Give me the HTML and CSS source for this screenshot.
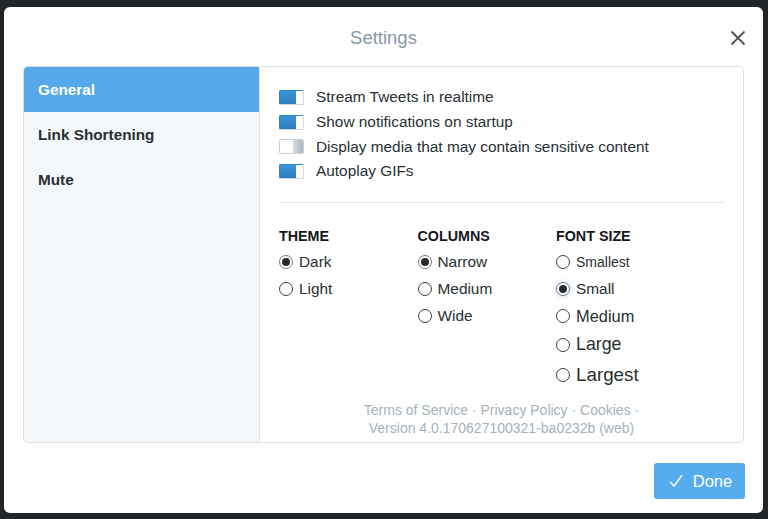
FILE: index.html
```html
<!DOCTYPE html>
<html>
<head>
<meta charset="utf-8">
<link rel="stylesheet" href="styles.css">
</head>
<body>
<div class="dialog">
  <header class="dlg-header">
    <h1 class="dlg-title">Settings</h1>
    <button class="close" aria-label="Close">
      <svg width="16" height="16" viewBox="0 0 16 16"><path d="M1.5 1.5 L14.5 14.5 M14.5 1.5 L1.5 14.5" stroke="#555" stroke-width="1.9" fill="none"/></svg>
    </button>
  </header>
  <div class="panel">
    <nav class="sidebar">
      <div class="nav-item active">General</div>
      <div class="nav-item">Link Shortening</div>
      <div class="nav-item">Mute</div>
    </nav>
    <section class="content">
      <div class="toggles">
        <div class="toggle-row"><span class="toggle on"></span><span>Stream Tweets in realtime</span></div>
        <div class="toggle-row"><span class="toggle on"></span><span>Show notifications on startup</span></div>
        <div class="toggle-row"><span class="toggle off"></span><span>Display media that may contain sensitive content</span></div>
        <div class="toggle-row"><span class="toggle on"></span><span>Autoplay GIFs</span></div>
      </div>
      <div class="divider"></div>
      <div class="groups">
        <div class="group">
          <h2 class="group-title">THEME</h2>
          <div class="radio-row"><span class="radio checked"></span>Dark</div>
          <div class="radio-row"><span class="radio"></span>Light</div>
        </div>
        <div class="group">
          <h2 class="group-title">COLUMNS</h2>
          <div class="radio-row"><span class="radio checked"></span>Narrow</div>
          <div class="radio-row"><span class="radio"></span>Medium</div>
          <div class="radio-row"><span class="radio"></span>Wide</div>
        </div>
        <div class="group">
          <h2 class="group-title">FONT SIZE</h2>
          <div class="radio-row fs-1"><span class="radio"></span>Smallest</div>
          <div class="radio-row fs-2"><span class="radio checked focus"></span>Small</div>
          <div class="radio-row fs-3"><span class="radio"></span>Medium</div>
          <div class="radio-row fs-4"><span class="radio"></span>Large</div>
          <div class="radio-row fs-5"><span class="radio"></span>Largest</div>
        </div>
      </div>
      <footer class="links">
        <div>Terms of Service · Privacy Policy · Cookies ·</div>
        <div>Version 4.0.170627100321-ba0232b (web)</div>
      </footer>
    </section>
  </div>
  <div class="dlg-footer">
    <button class="done">
      <svg width="14" height="14" viewBox="0 0 14 14"><path d="M1.5 8.2 L5 12 L12.8 1.5" stroke="#fff" stroke-width="1.4" fill="none" stroke-linecap="round" stroke-linejoin="round"/></svg>
      <span>Done</span>
    </button>
  </div>
</div>
</body>
</html>
```
FILE: styles.css
```css
* { box-sizing: border-box; }
html, body { margin: 0; padding: 0; }
body {
  width: 768px;
  height: 519px;
  background: #212528;
  font-family: "Liberation Sans", Arial, sans-serif;
  color: #292f33;
  padding: 7px 5px 6px 4px;
  overflow: hidden;
}
.dialog {
  width: 759px;
  height: 506px;
  background: #fff;
  border-radius: 6px;
  display: flex;
  flex-direction: column;
  padding: 0 19px;
}
.dlg-header {
  height: 59px;
  display: flex;
  align-items: center;
  justify-content: center;
  position: relative;
  padding-top: 2px;
}
.dlg-title {
  margin: 0;
  font-size: 18.5px;
  font-weight: normal;
  color: #8899a6;
}
.close {
  position: absolute;
  right: -2px;
  top: 23px;
  background: none;
  border: 0;
  padding: 0;
  width: 16px;
  height: 16px;
}
.close svg { display: block; }
.panel {
  height: 377px;
  border: 1px solid #d8dee3;
  border-radius: 5px;
  display: flex;
  overflow: hidden;
}
.sidebar {
  width: 236px;
  flex: none;
  background: #f5f8fa;
  border-right: 1px solid #e1e8ed;
}
.nav-item {
  height: 45px;
  display: flex;
  align-items: center;
  padding-left: 14px;
  font-size: 15.3px;
  font-weight: bold;
  color: #292f33;
}
.nav-item.active {
  background: #55a9ea;
  color: #fff;
}
.content {
  flex: 1;
  display: flex;
  flex-direction: column;
  padding: 18px 19px 5px 19px;
}
.toggles { display: flex; flex-direction: column; }
.toggle-row {
  height: 24.7px;
  display: flex;
  align-items: center;
  font-size: 15.4px;
}
.toggle {
  width: 25px;
  height: 15px;
  border-radius: 2px;
  margin-right: 12px;
  border: 1px solid #c6d0d8;
}
.toggle.on {
  background:
    linear-gradient(to bottom, #3b95da, #2a7dc0) left / 16px 100% no-repeat,
    #fff;
  border-color: #2f84c6 #cfd7dd #cfd7dd #2f84c6;
}
.toggle.off {
  background:
    linear-gradient(to right, #d7dde2, #aeb8c0) right / 10px 100% no-repeat,
    #fff;
}
.divider {
  height: 1px;
  background: #e1e8ed;
  margin-top: 18px;
}
.groups {
  display: flex;
  margin-top: 23px;
}
.group { width: 138.5px; flex: none; }
.group-title {
  margin: 0 0 2.5px 0;
  font-size: 14.3px;
  font-weight: bold;
  line-height: 20px;
  color: #14171a;
}
.radio-row {
  height: 27px;
  display: flex;
  align-items: center;
  font-size: 15.4px;
}
.radio {
  width: 14px;
  height: 14px;
  border-radius: 50%;
  border: 1px solid #3d3d3d;
  background: #fff;
  margin-right: 6px;
  flex: none;
  position: relative;
}
.radio.checked { border-color: #7a7a7a; }
.radio.checked::after {
  content: "";
  position: absolute;
  left: 2px; top: 2px;
  width: 8px; height: 8px;
  border-radius: 50%;
  background: #2b2b2b;
}
.radio.focus { box-shadow: 0 0 4px 1px rgba(110, 170, 230, 0.35); }
.fs-1 { font-size: 14px; }
.fs-2 { font-size: 15.4px; }
.fs-3 { font-size: 16.4px; height: 28px; }
.fs-4 { font-size: 17.8px; height: 29px; }
.fs-5 { font-size: 18.8px; height: 31px; }
.links {
  margin-top: auto;
  text-align: center;
  font-size: 14px;
  line-height: 18px;
  color: #a4b2bd;
}
.dlg-footer {
  flex: 1;
  display: flex;
  justify-content: flex-end;
  align-items: flex-start;
  padding-top: 20px;
}
.done {
  width: 91px;
  height: 36px;
  margin-right: -1px;
  background: #55acee;
  border: 0;
  border-radius: 3px;
  color: #fff;
  font-family: "Liberation Sans", Arial, sans-serif;
  font-size: 16.5px;
  display: flex;
  align-items: center;
  justify-content: center;
  gap: 10px;
  padding: 0 0 0 2px;
}
.done svg { display: block; }
```
